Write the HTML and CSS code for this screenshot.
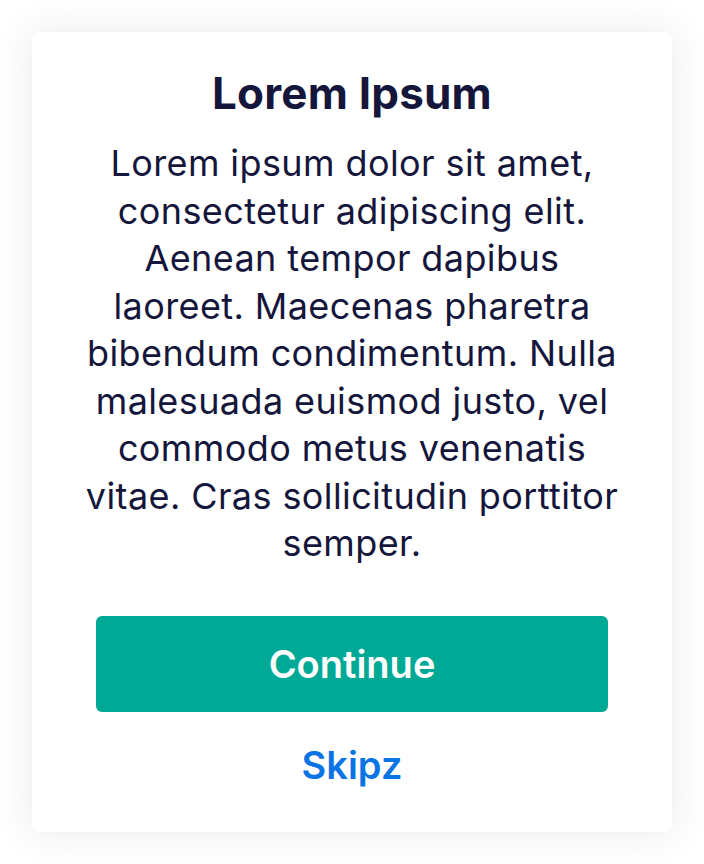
FILE: index.html
```html
<!DOCTYPE html>
<html lang="en">
<head>
<meta charset="utf-8">
<title>Lorem Ipsum</title>
<link rel="stylesheet" href="styles.css">
</head>
<body>
<div class="page">
  <div class="card">
    <h1 class="title">Lorem Ipsum</h1>
    <p class="body">Lorem ipsum dolor sit amet, consectetur adipiscing elit. Aenean tempor dapibus laoreet. Maecenas pharetra bibendum condimentum. Nulla malesuada euismod justo, vel commodo metus venenatis vitae. Cras sollicitudin porttitor semper.</p>
    <button class="primary">Continue</button>
    <a class="skip" href="#">Skipz</a>
  </div>
</div>
</body>
</html>
```
FILE: styles.css
```css
html, body {
  margin: 0;
  padding: 0;
  background: #ffffff;
}
.page {
  padding: 32px;
  font-family: Inter, "Noto Sans", sans-serif;
}
.card {
  box-sizing: border-box;
  width: 640px;
  height: 800px;
  background: #ffffff;
  border-radius: 8px;
  box-shadow: 0 0 40px rgba(40, 40, 70, 0.10);
  padding: 36px 48px 0;
  display: flex;
  flex-direction: column;
  align-items: center;
  color: #15163b;
}
.title {
  margin: 0;
  font-size: 44px;
  line-height: 50px;
  font-weight: 700;
  letter-spacing: 0.2px;
  text-align: center;
}
.body {
  margin: 22px 0 0;
  font-size: 36px;
  line-height: 47.5px;
  font-weight: 400;
  letter-spacing: 0.4px;
  text-align: center;
}
.primary {
  margin-top: 48px;
  width: 512px;
  height: 96px;
  border: none;
  border-radius: 6px;
  background: #00a896;
  color: #ffffff;
  font-family: inherit;
  font-size: 38px;
  font-weight: 600;
}
.skip {
  margin-top: 29px;
  font-size: 38px;
  line-height: 48px;
  font-weight: 600;
  color: #0b74e5;
  text-decoration: none;
}
```
